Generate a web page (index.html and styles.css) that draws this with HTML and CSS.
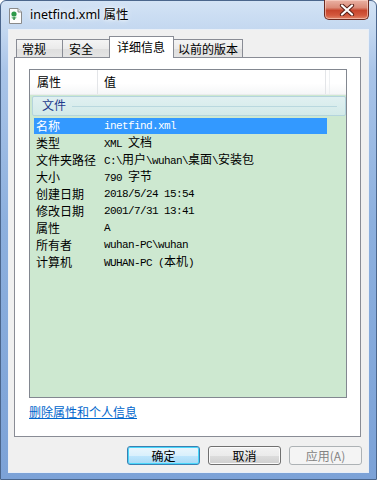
FILE: index.html
```html
<!DOCTYPE html>
<html lang="zh-CN">
<head>
<meta charset="utf-8">
<title>inetfind.xml 属性</title>
<link rel="stylesheet" href="styles.css">
</head>
<body>
<div class="window">
  <div class="titlebar">
    <svg class="app-icon" width="15" height="16" viewBox="0 0 15 16">
      <path d="M1.5 0.5 H10 L13.5 4 V15.5 H1.5 Z" fill="#fdfdfd" stroke="#8a8a8a"/>
      <path d="M10 0.5 V4 H13.5" fill="#e6e6e6" stroke="#8a8a8a"/>
      <circle cx="6" cy="6" r="2.6" fill="#2e9a4a"/>
      <path d="M3.5 8.5 Q6 11 8.5 8.5 L8 10.5 H4 Z" fill="#52b86a"/>
      <rect x="5.4" y="9" width="1.3" height="3" fill="#1f7a36"/>
    </svg>
    <span class="title">inetfind.xml 属性</span>
    <div class="close-btn">
      <svg width="16" height="12" viewBox="0 0 16 12">
        <path d="M3 1.5 L13 10.5 M13 1.5 L3 10.5" stroke="#5a2118" stroke-width="4.2" stroke-linecap="round"/>
        <path d="M3 1.5 L13 10.5 M13 1.5 L3 10.5" stroke="#ffffff" stroke-width="2.2" stroke-linecap="round"/>
      </svg>
    </div>
  </div>
  <div class="client">
    <div class="tabs">
      <div class="tab t1">常规</div>
      <div class="tab t2">安全</div>
      <div class="tab t3 active">详细信息</div>
      <div class="tab t4">以前的版本</div>
    </div>
    <div class="panel">
      <div class="listview">
        <div class="lv-header">
          <div class="hcol hcol1">属性</div>
          <div class="hcol hcol2">值</div>
          <div class="hcol hcol3"></div>
        </div>
        <div class="group">
          <span class="group-title">文件</span>
          <span class="group-line"></span>
        </div>
        <div class="row selected"><span class="k">名称</span><span class="v">inetfind.xml</span></div>
        <div class="row"><span class="k">类型</span><span class="v">XML <span class="cj">文档</span></span></div>
        <div class="row"><span class="k">文件夹路径</span><span class="v">C:\<span class="cj">用户</span>\wuhan\<span class="cj">桌面</span>\<span class="cj">安装包</span></span></div>
        <div class="row"><span class="k">大小</span><span class="v">790 <span class="cj">字节</span></span></div>
        <div class="row"><span class="k">创建日期</span><span class="v">2018/5/24 15:54</span></div>
        <div class="row"><span class="k">修改日期</span><span class="v">2001/7/31 13:41</span></div>
        <div class="row"><span class="k">属性</span><span class="v">A</span></div>
        <div class="row"><span class="k">所有者</span><span class="v">wuhan-PC\wuhan</span></div>
        <div class="row"><span class="k">计算机</span><span class="v">WUHAN-PC (<span class="cj">本机</span>)</span></div>
      </div>
      <a class="link" href="#">删除属性和个人信息</a>
    </div>
    <div class="buttons">
      <div class="btn default">确定</div>
      <div class="btn">取消</div>
      <div class="btn disabled">应用(A)</div>
    </div>
  </div>
</div>
</body>
</html>
```

FILE: styles.css
```css
html, body {
  margin: 0;
  padding: 0;
  background: #ffffff;
}
body {
  width: 377px;
  height: 480px;
  overflow: hidden;
  font-family: "Noto Sans CJK SC", "Noto Sans", sans-serif;
  font-size: 12px;
  color: #000;
}
.window {
  width: 377px;
  height: 480px;
  box-sizing: border-box;
  border: 1px solid #4b668c;
  border-radius: 6px 6px 0 0;
  background: linear-gradient(to bottom, #d3e3f5 0px, #c4d8f0 28px, #a9c4e8 70px, #8db0de 220px, #7ca2d7 100%);
  display: flex;
  flex-direction: column;
  padding: 0 7px 7px 7px;
}
.titlebar {
  height: 28px;
  display: flex;
  align-items: center;
  flex-shrink: 0;
}
.app-icon {
  margin-top: 1px;
  flex-shrink: 0;
}
.title {
  margin-left: 7px;
  font-family: "Noto Sans", "Noto Sans CJK SC", sans-serif;
  font-size: 12.5px;
  line-height: 16px;
  color: #000;
  text-shadow: 0 0 6px #ffffff, 0 0 3px #ffffff;
}
.close-btn {
  margin-left: auto;
  align-self: flex-start;
  margin-top: -1px;
  width: 45px;
  height: 20px;
  box-sizing: border-box;
  border: 1px solid #6b2a20;
  border-top: none;
  border-radius: 0 0 5px 5px;
  background: linear-gradient(to bottom, #eab2a4 0%, #db8b78 40%, #c7452c 55%, #d3583d 80%, #e0866a 100%);
  box-shadow: inset 0 0 0 1px rgba(255, 220, 210, 0.55);
  display: flex;
  align-items: center;
  justify-content: center;
}
.client {
  flex: 1;
  background: #f0f0f0;
  border: 1px solid #e9eff7;
  display: flex;
  flex-direction: column;
  padding: 0 6px 7px 5px;
}
.tabs {
  height: 27px;
  display: flex;
  align-items: flex-end;
  padding-left: 2px;
  position: relative;
  z-index: 2;
}
.tab {
  box-sizing: border-box;
  height: 18px;
  border: 1px solid #898c95;
  border-bottom: none;
  background: linear-gradient(to bottom, #f4f4f4 0%, #ebebeb 50%, #dedede 51%, #e4e4e4 100%);
  font-size: 12px;
  line-height: 17px;
  padding-left: 5px;
  white-space: nowrap;
}
.t1 { width: 47px; }
.t2 { width: 48px; margin-left: -1px; padding-left: 6px; }
.t3 { width: 65px; margin-left: -1px; }
.t4 { width: 70px; margin-left: -1px; padding-left: 4px; }
.tab.active {
  height: 22px;
  margin-bottom: -1px;
  background: #ffffff;
  padding-left: 7px;
  line-height: 20px;
  position: relative;
  z-index: 3;
}
.panel {
  height: 380px;
  box-sizing: border-box;
  background: #ffffff;
  border: 1px solid #898c95;
  padding: 11px 13px 0 14px;
  display: flex;
  flex-direction: column;
  margin-right: 1px;
}
.listview {
  height: 329px;
  box-sizing: border-box;
  border: 1px solid #828790;
  background: #cde8d0;
  display: flex;
  flex-direction: column;
}
.lv-header {
  height: 25px;
  flex-shrink: 0;
  display: flex;
  background: linear-gradient(to bottom, #ffffff 0%, #ffffff 55%, #f5f6f7 100%);
  border-bottom: 1px solid #eaecee;
  box-sizing: border-box;
}
.hcol {
  line-height: 24px;
  font-size: 12px;
  box-sizing: border-box;
}
.hcol1 {
  width: 68px;
  padding-left: 7px;
  border-right: 1px solid #e3e5e8;
}
.hcol2 {
  width: 228px;
  padding-left: 6px;
  border-right: 1px solid #e3e5e8;
}
.hcol3 {
  width: 4px;
  border-right: 1px solid #eef0f2;
}
.group {
  height: 20px;
  flex-shrink: 0;
  margin: 1px 0 2px 2px;
  box-sizing: border-box;
  border: 1px solid #b4d4dd;
  border-radius: 2px;
  background: linear-gradient(to bottom, #e0f0f1 0%, #d3eae8 100%);
  display: flex;
  align-items: center;
  padding-left: 9px;
}
.group-title {
  color: #1e3a8c;
  font-size: 12px;
  line-height: 16px;
  margin-top: -2px;
}
.group-line {
  flex: 1;
  height: 1px;
  background: #b9d8df;
  margin: 0 8px 0 6px;
}
.row {
  height: 16px;
  margin: 0 0 1px 4px;
  width: 293px;
  display: flex;
  align-items: center;
  flex-shrink: 0;
  white-space: nowrap;
}
.row.selected {
  background: #3399ff;
  color: #ffffff;
}
.k {
  width: 70px;
  padding-left: 2px;
  box-sizing: border-box;
  font-size: 12px;
  line-height: 16px;
}
.v {
  font-family: "Liberation Mono", "Noto Sans CJK SC", monospace;
  font-size: 11px;
  letter-spacing: -0.6px;
  line-height: 16px;
}
.cj {
  font-family: "Noto Sans CJK SC", sans-serif;
  font-size: 12px;
  letter-spacing: 0;
}
.link {
  margin-top: 6px;
  align-self: flex-start;
  color: #0066cc;
  font-size: 12px;
  line-height: 16px;
  text-decoration: underline;
}
.buttons {
  margin-top: 9px;
  display: flex;
  justify-content: flex-end;
  gap: 8px;
}
.btn {
  width: 73px;
  height: 19px;
  box-sizing: border-box;
  border: 1px solid #707070;
  border-radius: 3px;
  background: linear-gradient(to bottom, #f2f2f2 0%, #ebebeb 50%, #dddddd 51%, #cfcfcf 100%);
  box-shadow: inset 0 0 0 1px #fbfbfb;
  text-align: center;
  font-size: 12px;
  line-height: 17px;
}
.btn.default {
  border-color: #3c7fb1;
  background: linear-gradient(to bottom, #eaf6fd 0%, #d9f0fc 50%, #bee6fd 51%, #a7d9f5 100%);
  box-shadow: inset 0 0 0 1px #48d7fb;
}
.btn.disabled {
  border-color: #adb2b5;
  background: #f4f4f4;
  box-shadow: none;
  color: #838383;
}
```
